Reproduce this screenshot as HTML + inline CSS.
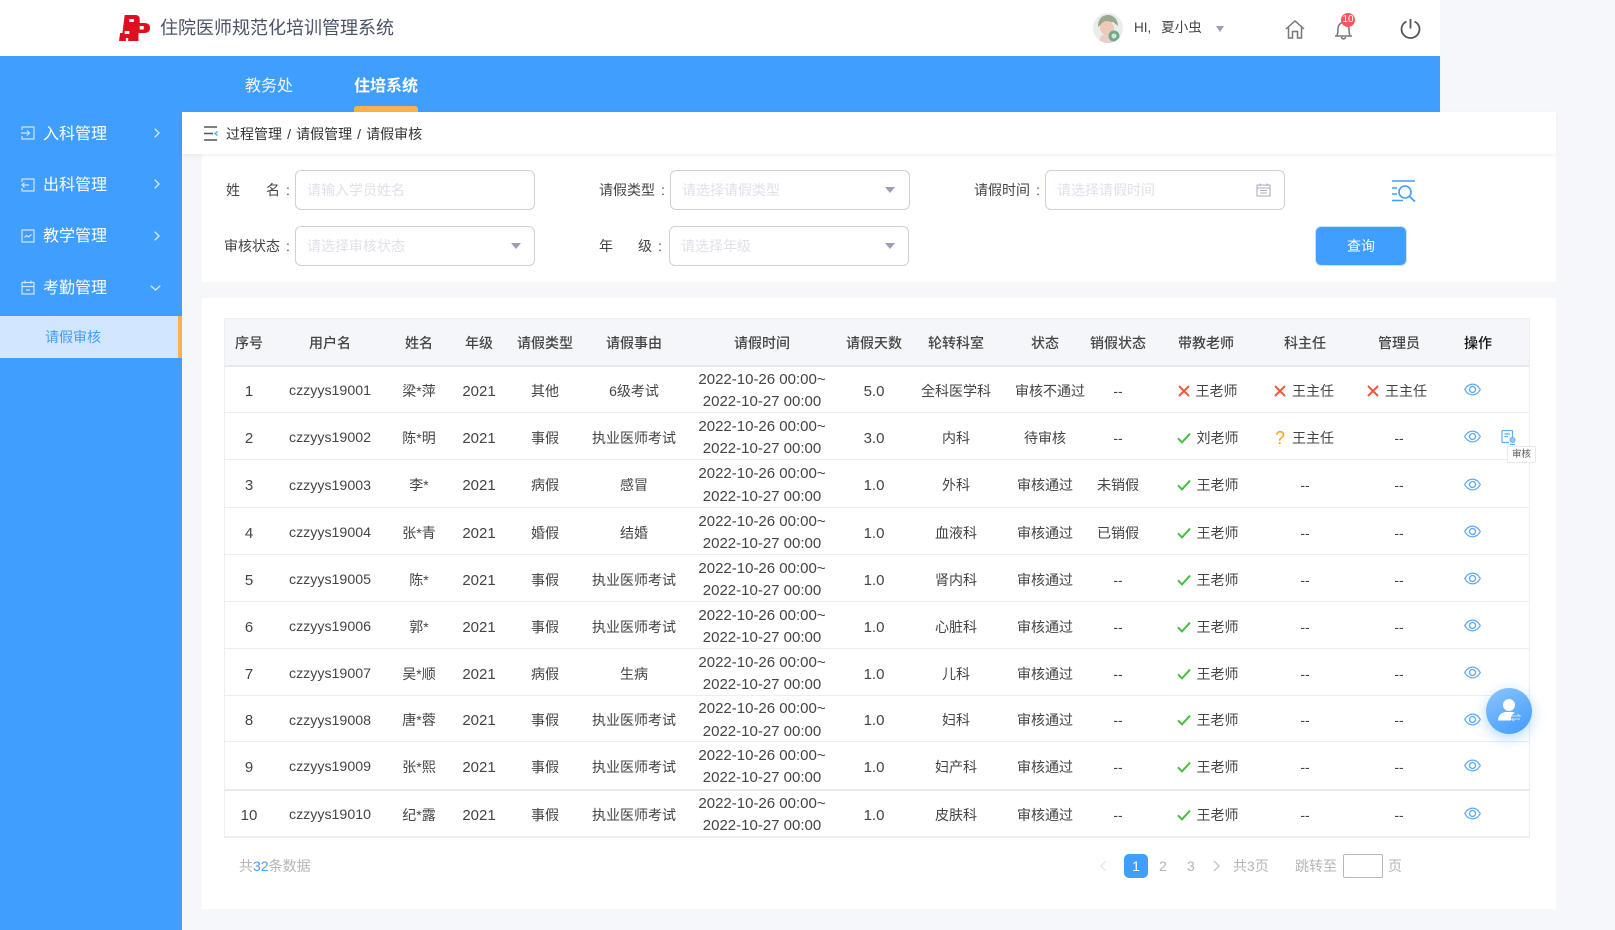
<!DOCTYPE html>
<html lang="zh-CN">
<head>
<meta charset="utf-8">
<title>住院医师规范化培训管理系统</title>
<style>
*{box-sizing:border-box;margin:0;padding:0}
html,body{width:1615px;height:930px;overflow:hidden;background:#f5f7fb}
body{position:relative;font-family:"Liberation Sans","Noto Sans CJK SC",sans-serif;font-size:14px;color:#444}
.a{position:absolute;white-space:nowrap}
svg{display:block}
.head{position:absolute;left:0;top:0;width:1440px;height:56px;background:#fff}
.bar{position:absolute;left:0;top:56px;width:1440px;height:56px;background:#409eff}
.side{position:absolute;left:0;top:112px;width:182px;height:818px;background:#409eff}
.mi{position:absolute;left:43px;color:#fff;font-size:16px;line-height:24px;white-space:nowrap}
.sub{position:absolute;left:0;top:316px;width:182px;height:42px;background:#d2e6ff;border-right:4px solid #ffb04d;color:#409eff;font-size:14px;line-height:43px;padding-left:45px}
.crumb{position:absolute;left:182px;top:112px;width:1374px;height:42px;background:#fff;box-shadow:0 2px 5px rgba(0,0,0,.06);z-index:2}
.filter{position:absolute;left:202px;top:154px;width:1354px;height:128px;background:#fff}
.panel{position:absolute;left:202px;top:298px;width:1354px;height:611px;background:#fff}
.inp{position:absolute;height:40px;width:240px;border:1px solid #cdd0e0;border-radius:6px;background:#fff;color:#dfe1ea;font-size:14px;line-height:38px;padding-left:11px}
.lb{position:absolute;color:#444;line-height:20px;white-space:nowrap}
.c{margin-left:6px}
.caret{position:absolute;width:0;height:0;border-left:5px solid transparent;border-right:5px solid transparent;border-top:6px solid #9a9fb5}
.btn{position:absolute;left:1315px;top:226px;width:92px;height:40px;background:#409eff;border-radius:6px;border:1px solid #cfe3fb;color:#fff;text-align:center;line-height:38px}
table{position:absolute;left:224px;top:318px;width:1306px;border-collapse:collapse;table-layout:fixed;z-index:1}
th{height:47px;background:#f5f6fa;font-weight:500;color:#444;font-size:14px;border-top:1px solid #ebeef5;border-bottom:2px solid #e8e9ed;text-align:center;padding-top:3px}
td{text-align:center;border-bottom:1px solid #ebeef5;padding:3px 0 0;color:#444;overflow:visible;white-space:nowrap}
tr.l td{border-bottom:2px solid #e8e9ed}
.tbl-edge{position:absolute;left:224px;top:318px;width:1306px;height:520px;border:1px solid #ebeef5;pointer-events:none;z-index:1}
td.n{font-size:15px;padding-top:4px}
td.u{font-size:14.2px;padding-top:4px}
td.d{font-size:15px;line-height:22.7px;padding:0;vertical-align:middle}
td.d div{position:relative;top:2px;height:45px}
.p{display:inline-flex;align-items:center;justify-content:center;gap:6px;width:100%}
.p svg{flex:none}
.t{padding-left:3px}
.k{padding-right:2px}
.g{padding-right:4px}
td.op{text-align:left;padding:1px 0 0 14px}
.pg{position:absolute;color:#b5b5b5;line-height:24px;white-space:nowrap}
.fab{position:absolute;left:1486px;top:688px;width:46px;height:46px;border-radius:50%;background:linear-gradient(150deg,#8cc4ff,#3f9bfb);box-shadow:0 4px 14px rgba(64,158,255,.4);z-index:5}
.tip{position:absolute;left:1507px;top:446px;width:29px;height:17px;background:#fff;border:1px solid #e6e8ee;border-radius:2px;font-size:9.5px;line-height:15px;text-align:center;color:#555;z-index:4}
</style>
</head>
<body>
<svg width="0" height="0" style="position:absolute">
<symbol id="eye" viewBox="0 0 17 13"><path d="M.7 6.500C2.700 3 5.300 1.100 8.500 1.100S14.300 3 16.300 6.500C14.300 10 11.700 11.900 8.500 11.900S2.700 10 .7 6.500Z" fill="none" stroke="#5aa8f7" stroke-width="1.250"/><circle cx="8.500" cy="6.500" r="3" fill="none" stroke="#5aa8f7" stroke-width="1.250"/></symbol>
<symbol id="ok" viewBox="0 0 14 12"><path d="M1 6.300 5 10.400 13 1.600" fill="none" stroke="#45bf3f" stroke-width="2"/></symbol>
<symbol id="no" viewBox="0 0 12 12"><path d="M1 1 11 11M11 1 1 11" fill="none" stroke="#f0593e" stroke-width="2"/></symbol>
</svg>

<div class="head"></div>
<svg class="a" style="left:119px;top:15px" width="32" height="26" viewBox="0 0 32 26"><path d="M5.700 0H16Q20.700 0 20.700 4V8H25.300Q31 8 31 13Q31 18 25.300 18H19.500V26H9.200V23H6.900V26H0L1.100 18H3.400Z" fill="#e00f1f"/><rect x="10.300" y="4" width="4.600" height="3" fill="#fff"/><rect x="5.700" y="16" width="4.600" height="3" fill="#fff"/><rect x="20.700" y="11" width="4" height="3.500" fill="#fff"/></svg>
<div class="a" style="left:160px;top:15px;font-size:18px;line-height:26px;color:#4a5266">住院医师规范化培训管理系统</div>

<svg class="a" style="left:1093px;top:13px" width="30" height="30" viewBox="0 0 30 30"><defs><clipPath id="c"><circle cx="15" cy="15" r="15"/></clipPath></defs><g clip-path="url(#c)"><rect width="30" height="30" fill="#e9eeec"/><path d="M5 14C5 5 10 2 15 2S25 6 25 13L20 9 10 10Z" fill="#9aa98d"/><ellipse cx="14" cy="15" rx="7" ry="7" fill="#edc9b6"/><path d="M6 30C6 23 10 21 14 21S22 24 22 30Z" fill="#e8cfc8"/><circle cx="21" cy="23" r="5.500" fill="#6faa8d"/><circle cx="21" cy="23" r="2.500" fill="#d7e6d5"/></g></svg>
<div class="a" style="left:1134px;top:18px;line-height:20px;font-size:13.500px;color:#444">HI,<span style="margin-left:10px">夏小虫</span></div>
<div class="caret" style="left:1216px;top:26px;border-left-width:4.500px;border-right-width:4.500px"></div>
<svg class="a" style="left:1285px;top:20px" width="20" height="19" viewBox="0 0 20 19"><path d="M1 9 10 1 19 9M3.500 7.500V18H7.500V11.500H12.500V18H16.500V7.500" fill="none" stroke="#777" stroke-width="1.500"/></svg>
<svg class="a" style="left:1333px;top:20px" width="21" height="20" viewBox="0 0 21 20"><path d="M2 16H19M4 16C5 13 5 12 5 9C5 5 7.500 2.500 10.500 2.500S16 5 16 9C16 12 16 13 17 16M8.500 17C8.500 19.500 12.500 19.500 12.500 17" fill="none" stroke="#777" stroke-width="1.500"/></svg>
<div class="a" style="left:1341px;top:13px;width:14px;height:14px;border-radius:50%;background:#f9565c;color:#fff;font-size:10px;line-height:14px;text-align:center">10</div>
<svg class="a" style="left:1400px;top:18px" width="21" height="21" viewBox="0 0 21 21"><path d="M6.500 3.500C3.500 5 1.500 7.500 1.500 11A9 9 0 0 0 19.500 11C19.500 7.500 17.500 5 14.500 3.500M10.500 1V10.500" fill="none" stroke="#555" stroke-width="1.800"/></svg>

<div class="bar"></div>
<div class="a" style="left:245px;top:75px;font-size:16px;line-height:24px;color:#f0f6ff">教务处</div>
<div class="a" style="left:354px;top:75px;font-size:16px;line-height:24px;color:#fff;font-weight:700">住培系统</div>
<div class="a" style="left:354px;top:106px;width:64px;height:6px;background:#ffb04d;border-radius:3px 3px 0 0"></div>

<div class="side"></div>
<svg class="a" style="left:21px;top:126px" width="14" height="14" viewBox="0 0 14 14"><path d="M1 4V1H13V13H1V10M0 7H8M6 4.500 8.500 7 6 9.500" fill="none" stroke="#cfe5ff" stroke-width="1.200"/></svg>
<div class="mi" style="top:123px">入科管理</div>
<svg class="a" style="left:154px;top:128px" width="6" height="10" viewBox="0 0 6 10"><path d="M.7 .7 5 5 .7 9.300" fill="none" stroke="#dcecff" stroke-width="1.300"/></svg>
<svg class="a" style="left:21px;top:178px" width="14" height="14" viewBox="0 0 14 14"><path d="M1 4V1H13V13H1V10M8 7H1M3.500 4.500 1 7 3.500 9.500" fill="none" stroke="#cfe5ff" stroke-width="1.200"/></svg>
<div class="mi" style="top:174px">出科管理</div>
<svg class="a" style="left:154px;top:179px" width="6" height="10" viewBox="0 0 6 10"><path d="M.7 .7 5 5 .7 9.300" fill="none" stroke="#dcecff" stroke-width="1.300"/></svg>
<svg class="a" style="left:21px;top:229px" width="14" height="14" viewBox="0 0 14 14"><path d="M1 1H13V13H1ZM3.500 8.500 5.500 6.500 7.500 8 10.500 5.500" fill="none" stroke="#cfe5ff" stroke-width="1.200"/></svg>
<div class="mi" style="top:225px">教学管理</div>
<svg class="a" style="left:154px;top:231px" width="6" height="10" viewBox="0 0 6 10"><path d="M.7 .7 5 5 .7 9.300" fill="none" stroke="#dcecff" stroke-width="1.300"/></svg>
<svg class="a" style="left:21px;top:280px" width="14" height="15" viewBox="0 0 14 15"><path d="M1 2.500H13V14H1ZM1 6.500H13M4 .500V3.500M10 .500V3.500M5 10H9" fill="none" stroke="#cfe5ff" stroke-width="1.200"/></svg>
<div class="mi" style="top:277px">考勤管理</div>
<svg class="a" style="left:150px;top:285px" width="11" height="6" viewBox="0 0 11 6"><path d="M.7 .7 5.500 5 10.300 .7" fill="none" stroke="#dcecff" stroke-width="1.300"/></svg>
<div class="sub">请假审核</div>

<div class="crumb">
<svg class="a" style="left:22px;top:14px" width="14" height="15" viewBox="0 0 14 15"><path d="M0 1H13M0 7.500H9M0 14H13" stroke="#555" stroke-width="1.600" fill="none"/><path d="M13.500 5.500 11 7.500 13.500 9.500" stroke="#409eff" stroke-width="1.200" fill="none"/></svg>
<div class="a" style="left:44px;top:12px;line-height:20px;color:#333;word-spacing:1.200px">过程管理 / 请假管理 / 请假审核</div>
</div>

<div class="filter"></div>
<div class="lb" style="left:226px;top:180px">姓</div><div class="lb" style="left:266px;top:180px">名<span class="c">:</span></div>
<div class="inp" style="left:295px;top:170px">请输入学员姓名</div>
<div class="lb" style="left:599px;top:180px">请假类型<span class="c">:</span></div>
<div class="inp" style="left:670px;top:170px">请选择请假类型</div>
<div class="caret" style="left:885px;top:187px"></div>
<div class="lb" style="left:974px;top:180px">请假时间<span class="c">:</span></div>
<div class="inp" style="left:1045px;top:170px">请选择请假时间</div>
<svg class="a" style="left:1256px;top:183px" width="15" height="14" viewBox="0 0 15 14"><path d="M1 2H14V13H1ZM1 5H14M4 .500V3M11 .500V3M4 7.500H11M4 10H11" fill="none" stroke="#a9adc0" stroke-width="1.100"/></svg>
<svg class="a" style="left:1392px;top:180px" width="25" height="22" viewBox="0 0 25 22"><path d="M0 1H23M0 8H5M0 14H5M0 20.500H11" stroke="#409eff" stroke-width="1.600" fill="none"/><circle cx="13" cy="12" r="6" fill="none" stroke="#409eff" stroke-width="1.600"/><path d="M17.500 16.500 23 21.500" stroke="#409eff" stroke-width="1.800"/></svg>
<div class="lb" style="left:224px;top:236px">审核状态<span class="c">:</span></div>
<div class="inp" style="left:295px;top:226px">请选择审核状态</div>
<div class="caret" style="left:511px;top:243px"></div>
<div class="lb" style="left:599px;top:236px">年</div><div class="lb" style="left:638px;top:236px">级<span class="c">:</span></div>
<div class="inp" style="left:669px;top:226px">请选择年级</div>
<div class="caret" style="left:885px;top:243px"></div>
<div class="btn">查询</div>

<div class="panel"></div>
<table>
<colgroup><col style="width:50px"><col style="width:112px"><col style="width:66px"><col style="width:54px"><col style="width:78px"><col style="width:100px"><col style="width:156px"><col style="width:68px"><col style="width:96px"><col style="width:82px"><col style="width:64px"><col style="width:112px"><col style="width:86px"><col style="width:102px"><col style="width:80px"></colgroup>
<thead><tr><th>序号</th><th>用户名</th><th>姓名</th><th>年级</th><th>请假类型</th><th>请假事由</th><th>请假时间</th><th>请假天数</th><th>轮转科室</th><th>状态</th><th>销假状态</th><th>带教老师</th><th>科主任</th><th>管理员</th><th style="text-align:left;color:#111;padding-left:14px">操作</th></tr></thead>
<tbody>
<tr style="height:47px"><td class="n">1</td><td class="u">czzyys19001</td><td>梁*萍</td><td class="n">2021</td><td>其他</td><td>6级考试</td><td class="d"><div>2022-10-26 00:00~<br>2022-10-27 00:00</div></td><td class="n">5.0</td><td>全科医学科</td><td style="padding-left:10px">审核不通过</td><td>--</td><td class="t"><span class="p"><svg width="12" height="12"><use href="#no"/></svg>王老师</span></td><td class="k"><span class="p"><svg width="12" height="12"><use href="#no"/></svg>王主任</span></td><td class="g"><span class="p"><svg width="12" height="12"><use href="#no"/></svg>王主任</span></td><td class="op"><svg width="17" height="13"><use href="#eye"/></svg></td></tr>
<tr style="height:47px"><td class="n">2</td><td class="u">czzyys19002</td><td>陈*明</td><td class="n">2021</td><td>事假</td><td>执业医师考试</td><td class="d"><div>2022-10-26 00:00~<br>2022-10-27 00:00</div></td><td class="n">3.0</td><td>内科</td><td>待审核</td><td>--</td><td class="t"><span class="p"><svg width="14" height="12"><use href="#ok"/></svg>刘老师</span></td><td class="k"><span class="p"><span style="color:#f5a21d;font-size:18px;line-height:16px;width:12px;text-align:center">?</span>王主任</span></td><td>--</td><td class="op"><svg width="17" height="13"><use href="#eye"/></svg></td></tr>
<tr style="height:48px"><td class="n">3</td><td class="u">czzyys19003</td><td>李*</td><td class="n">2021</td><td>病假</td><td>感冒</td><td class="d"><div>2022-10-26 00:00~<br>2022-10-27 00:00</div></td><td class="n">1.0</td><td>外科</td><td>审核通过</td><td>未销假</td><td class="t"><span class="p"><svg width="14" height="12"><use href="#ok"/></svg>王老师</span></td><td>--</td><td>--</td><td class="op"><svg width="17" height="13"><use href="#eye"/></svg></td></tr>
<tr style="height:47px"><td class="n">4</td><td class="u">czzyys19004</td><td>张*青</td><td class="n">2021</td><td>婚假</td><td>结婚</td><td class="d"><div>2022-10-26 00:00~<br>2022-10-27 00:00</div></td><td class="n">1.0</td><td>血液科</td><td>审核通过</td><td>已销假</td><td class="t"><span class="p"><svg width="14" height="12"><use href="#ok"/></svg>王老师</span></td><td>--</td><td>--</td><td class="op"><svg width="17" height="13"><use href="#eye"/></svg></td></tr>
<tr style="height:47px"><td class="n">5</td><td class="u">czzyys19005</td><td>陈*</td><td class="n">2021</td><td>事假</td><td>执业医师考试</td><td class="d"><div>2022-10-26 00:00~<br>2022-10-27 00:00</div></td><td class="n">1.0</td><td>肾内科</td><td>审核通过</td><td>--</td><td class="t"><span class="p"><svg width="14" height="12"><use href="#ok"/></svg>王老师</span></td><td>--</td><td>--</td><td class="op"><svg width="17" height="13"><use href="#eye"/></svg></td></tr>
<tr style="height:47px"><td class="n">6</td><td class="u">czzyys19006</td><td>郭*</td><td class="n">2021</td><td>事假</td><td>执业医师考试</td><td class="d"><div>2022-10-26 00:00~<br>2022-10-27 00:00</div></td><td class="n">1.0</td><td>心脏科</td><td>审核通过</td><td>--</td><td class="t"><span class="p"><svg width="14" height="12"><use href="#ok"/></svg>王老师</span></td><td>--</td><td>--</td><td class="op"><svg width="17" height="13"><use href="#eye"/></svg></td></tr>
<tr style="height:47px"><td class="n">7</td><td class="u">czzyys19007</td><td>吴*顺</td><td class="n">2021</td><td>病假</td><td>生病</td><td class="d"><div>2022-10-26 00:00~<br>2022-10-27 00:00</div></td><td class="n">1.0</td><td>儿科</td><td>审核通过</td><td>--</td><td class="t"><span class="p"><svg width="14" height="12"><use href="#ok"/></svg>王老师</span></td><td>--</td><td>--</td><td class="op"><svg width="17" height="13"><use href="#eye"/></svg></td></tr>
<tr style="height:46px"><td class="n">8</td><td class="u">czzyys19008</td><td>唐*蓉</td><td class="n">2021</td><td>事假</td><td>执业医师考试</td><td class="d"><div>2022-10-26 00:00~<br>2022-10-27 00:00</div></td><td class="n">1.0</td><td>妇科</td><td>审核通过</td><td>--</td><td class="t"><span class="p"><svg width="14" height="12"><use href="#ok"/></svg>王老师</span></td><td>--</td><td>--</td><td class="op"><svg width="17" height="13"><use href="#eye"/></svg></td></tr>
<tr class="l" style="height:48px"><td class="n">9</td><td class="u">czzyys19009</td><td>张*熙</td><td class="n">2021</td><td>事假</td><td>执业医师考试</td><td class="d"><div>2022-10-26 00:00~<br>2022-10-27 00:00</div></td><td class="n">1.0</td><td>妇产科</td><td>审核通过</td><td>--</td><td class="t"><span class="p"><svg width="14" height="12"><use href="#ok"/></svg>王老师</span></td><td>--</td><td>--</td><td class="op"><svg width="17" height="13"><use href="#eye"/></svg></td></tr>
<tr style="height:47px"><td class="n">10</td><td class="u">czzyys19010</td><td>纪*露</td><td class="n">2021</td><td>事假</td><td>执业医师考试</td><td class="d"><div>2022-10-26 00:00~<br>2022-10-27 00:00</div></td><td class="n">1.0</td><td>皮肤科</td><td>审核通过</td><td>--</td><td class="t"><span class="p"><svg width="14" height="12"><use href="#ok"/></svg>王老师</span></td><td>--</td><td>--</td><td class="op"><svg width="17" height="13"><use href="#eye"/></svg></td></tr>
</tbody>
</table>
<div class="tbl-edge"></div>

<svg class="a" style="left:1501px;top:430px;z-index:3" width="15" height="15" viewBox="0 0 15 15"><path d="M8 12.500H2Q1 12.500 1 11.500V1.500Q1 .500 2 .500H10.500Q11.500 .500 11.500 1.500V7" fill="none" stroke="#5fa9f5" stroke-width="1.200"/><path d="M3.500 4H9M3.500 6.500H7" stroke="#5fa9f5" stroke-width="1.200"/><circle cx="11.500" cy="10" r="2.500" fill="#9cc9f8" stroke="#5fa9f5"/><path d="M9 14.500H14" stroke="#5fa9f5" stroke-width="1.200"/></svg>
<div class="tip">审核</div>

<div class="pg" style="left:239px;top:854px">共<span style="color:#409eff">32</span>条数据</div>
<svg class="a" style="left:1100px;top:860px" width="7" height="12" viewBox="0 0 7 12"><path d="M6 1 1 6 6 11" fill="none" stroke="#e2e2e2" stroke-width="1.200"/></svg>
<div class="a" style="left:1124px;top:854px;width:24px;height:24px;border-radius:5px;background:#409eff;color:#fff;text-align:center;line-height:24px">1</div>
<div class="pg" style="left:1159px;top:854px">2</div>
<div class="pg" style="left:1187px;top:854px">3</div>
<svg class="a" style="left:1213px;top:860px" width="7" height="12" viewBox="0 0 7 12"><path d="M1 1 6 6 1 11" fill="none" stroke="#bcbcbc" stroke-width="1.200"/></svg>
<div class="pg" style="left:1233px;top:854px">共3页</div>
<div class="pg" style="left:1295px;top:854px">跳转至</div>
<div class="a" style="left:1343px;top:854px;width:40px;height:24px;border:1px solid #b9b9b9;border-radius:2px;background:#fff"></div>
<div class="pg" style="left:1388px;top:854px">页</div>

<div class="fab">
<svg class="a" style="left:0;top:0" width="46" height="46" viewBox="0 0 46 46"><circle cx="23" cy="17" r="6" fill="#fff"/><path d="M12 32.500C12 27.500 15 25 19 24H27L29 25C26 26 24.500 29 25 32.500Z" fill="#fff"/><path d="M25.500 28H34L31.500 26M34 31H25.500L28 33" fill="none" stroke="#cfe5ff" stroke-width="1.100"/></svg>
</div>
</body>
</html>
